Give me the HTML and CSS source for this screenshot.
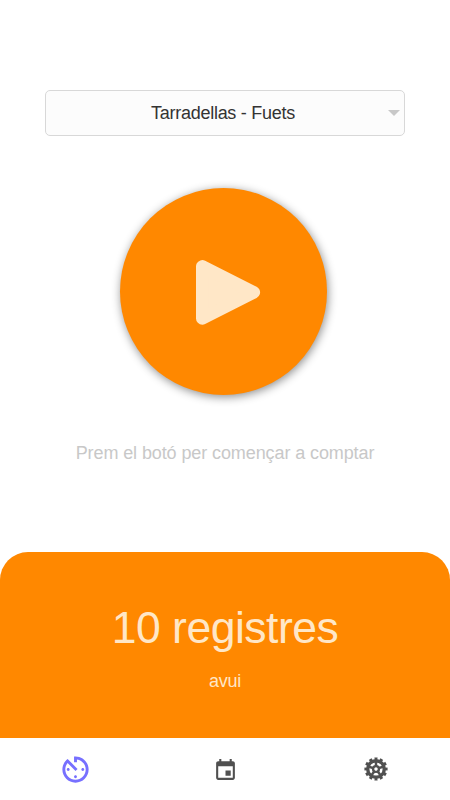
FILE: index.html
```html
<!DOCTYPE html>
<html lang="ca">
<head>
<meta charset="utf-8">
<title>Comptador</title>
<link rel="stylesheet" href="styles.css">
</head>
<body>
<main class="screen">
  <button class="picker"><span class="picker-label">Tarradellas - Fuets</span><svg class="caret" viewBox="0 0 12 6"><path d="M0 0H12L6 6Z"/></svg></button>
  <button class="play" aria-label="Comença">
    <svg viewBox="0 0 64 65"><path d="M6.3 6.4V58.4L57.8 32.4Z"/></svg>
  </button>
  <p class="hint">Prem el botó per començar a comptar</p>
  <section class="summary">
    <h1 class="count">10 registres</h1>
    <p class="period">avui</p>
  </section>
  <nav class="tabs">
    <a class="tab active"><svg class="timer" viewBox="0 0 24 24"><path d="M11 17c0 .55.45 1 1 1s1-.45 1-1-.45-1-1-1-1 .45-1 1zm0-14v4h2V5.08c3.39.49 6 3.39 6 6.92 0 3.87-3.13 7-7 7s-7-3.13-7-7c0-1.68.59-3.22 1.58-4.42L12 13l1.41-1.41-6.8-6.8v.02C4.42 6.45 3 9.05 3 12c0 4.97 4.02 9 9 9 4.97 0 9-4.03 9-9s-4.03-9-9-9h-1zm7 9c0-.55-.45-1-1-1s-1 .45-1 1 .45 1 1 1 1-.45 1-1zM6 12c0 .55.45 1 1 1s1-.45 1-1-.45-1-1-1-1 .45-1 1z"/></svg></a>
    <a class="tab"><svg class="calendar" viewBox="0 0 24 24"><path d="M17 12h-5v5h5v-5zM16 1v2H8V1H6v2H5c-1.11 0-1.99.9-1.99 2L3 19c0 1.1.89 2 2 2h14c1.1 0 2-.9 2-2V5c0-1.1-.9-2-2-2h-1V1h-2zm3 18H5V8h14v11z"/></svg></a>
    <a class="tab"><svg class="gear" viewBox="-12 -12 24 24">
      <circle class="teeth" r="10.3" pathLength="24"/>
      <circle class="rim" r="8.3"/>
      <circle class="hub" r="2.9"/>
      <path class="spokes" d="M0-3V-8M2.85-.93 7.6-2.47M1.76 2.43 4.7 6.47M-1.76 2.43-4.7 6.47M-2.85-.93-7.6-2.47"/>
    </svg></a>
  </nav>
</main>
</body>
</html>
```
FILE: styles.css
```css
* { box-sizing: border-box; }
body {
  margin: 0;
  background: #fff;
  font-family: "Liberation Sans", Arial, sans-serif;
}
.screen {
  width: 450px;
  height: 800px;
  padding-top: 90px;
  display: flex;
  flex-direction: column;
  align-items: center;
  overflow: hidden;
}
button { font: inherit; padding: 0; }
.picker {
  width: 360px;
  height: 46px;
  flex: none;
  display: grid;
  grid-template-columns: 16px 1fr 16px;
  align-items: center;
  background: #fcfcfc;
  border: 1px solid #d8d8d8;
  border-radius: 5px;
  color: #333;
  font-size: 18px;
}
.picker-label {
  grid-column: 2;
  text-align: center;
  white-space: nowrap;
  letter-spacing: -0.27px;
  margin-right: 4px;
}
.caret { width: 12px; height: 6px; margin-top: -1px; fill: #c8c8c8; }
.play {
  width: 207px;
  height: 207px;
  flex: none;
  margin: 52px 2.4px 0 0;
  border: 0;
  border-radius: 50%;
  background: #ff8800;
  box-shadow: 1px 2px 10px rgba(0, 0, 0, 0.45);
  display: flex;
  align-items: center;
  justify-content: center;
}
.play svg {
  width: 64px;
  height: 65px;
  margin-left: 8px;
  margin-top: 1px;
  overflow: visible;
  fill: #ffe7c7;
  stroke: #ffe7c7;
  stroke-width: 12.6;
  stroke-linejoin: round;
}
.hint {
  margin: 47px 0 0;
  height: 22px;
  line-height: 22px;
  font-size: 18px;
  letter-spacing: -0.1px;
  color: #c8c8c8;
  white-space: nowrap;
}
.summary {
  width: 450px;
  height: 186px;
  margin-top: 88px;
  padding-top: 50px;
  flex: none;
  border-radius: 28px 28px 0 0;
  background: #ff8800;
  color: #ffe7c7;
  text-align: center;
}
.count {
  margin: 0;
  font-weight: 400;
  font-size: 44.5px;
  letter-spacing: -0.5px;
  line-height: 52px;
}
.period {
  margin: 17px 0 0;
  font-size: 18px;
  line-height: 20px;
  letter-spacing: -0.2px;
}
.tabs {
  width: 450px;
  height: 62px;
  display: grid;
  grid-template-columns: repeat(3, 1fr);
  flex: none;
}
.tab {
  display: flex;
  align-items: center;
  justify-content: center;
  fill: #505050;
  padding-left: 1px;
}
.active { fill: #7770ff; }
.timer { width: 35px; height: 35px; }
.calendar { width: 25px; height: 25px; margin-top: 2px; }
.gear { width: 24px; height: 24px; fill: none; stroke: #505050; }
.teeth { stroke-width: 2.6; stroke-dasharray: 1.1 0.9; stroke-dashoffset: 0.55; }
.rim { stroke-width: 3.4; }
.hub { stroke-width: 2.4; }
.spokes { stroke-width: 2.5; }
```
